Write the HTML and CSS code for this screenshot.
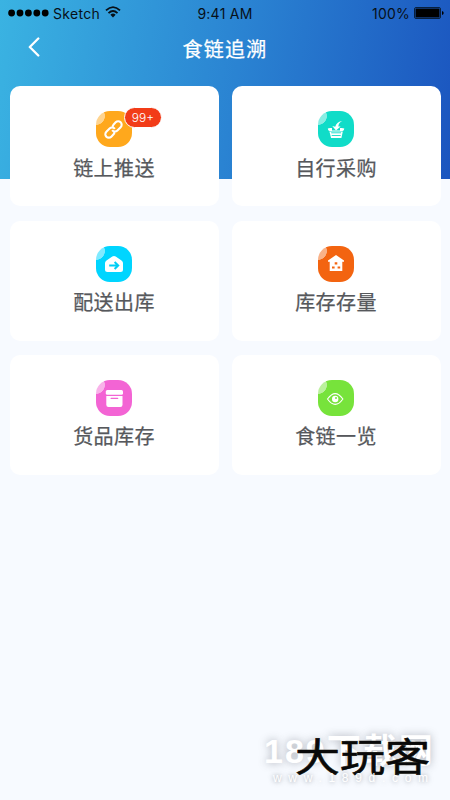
FILE: index.html
```html
<!DOCTYPE html>
<html lang="zh-CN">
<head>
<meta charset="utf-8">
<title>食链追溯</title>
<link rel="stylesheet" href="styles.css">
</head>
<body>
<div class="app">
  <header class="top">
    <div class="status">
      <div class="carrier">
        <svg class="signal" width="41" height="8" viewBox="0 0 41 8"><circle cx="3.6" cy="4" r="3.4"/><circle cx="12" cy="4" r="3.4"/><circle cx="20.4" cy="4" r="3.4"/><circle cx="28.8" cy="4" r="3.4"/><circle cx="37.2" cy="4" r="3.4"/></svg>
        <span class="network">Sketch</span>
        <svg class="wifi" width="16" height="12" viewBox="0 0 16 12" fill="none" stroke="#071018" stroke-width="1.8"><path d="M1 4.4Q8-2.2 15 4.4M3.5 7.1Q8 2.9 12.5 7.1"/><path d="M5.4 8.7Q8 6.5 10.6 8.7L8 11.4Z" fill="#071018" stroke="none"/></svg>
      </div>
      <span class="time">9:41 AM</span>
      <div class="power"><span>100%</span><svg width="30" height="12" viewBox="0 0 30 12"><rect x=".5" y=".5" width="26" height="11" rx="1.5" fill="none" stroke="#08203e"/><rect x="1.5" y="1.5" width="24" height="9" rx=".5"/><path d="M28 4Q29.7 4.3 29.7 6T28 8Z"/></svg></div>
    </div>
    <div class="nav">
      <svg class="back" width="12" height="20" viewBox="0 0 12 20" fill="none" stroke="#fff" stroke-width="2.3" stroke-linecap="round" stroke-linejoin="round"><path d="M10.3 1.5L1.8 10L10.3 18.5"/></svg>
      <h1>食链追溯</h1>
    </div>
  </header>
  <main class="grid">
    <section class="card">
      <div class="icon orange"><svg viewBox="0 0 36 36" fill="none" stroke="#fff" stroke-width="2.1"><g transform="rotate(-45 17.5 18.5)"><path d="M16.5 20.6Q15.6 22 13.8 22H10.9A3.5 3.5 0 0 1 10.9 15H15.5A3.5 3.5 0 0 1 18.9 19"/><path d="M18.5 16.4Q19.4 15 21.2 15H24.1A3.5 3.5 0 0 1 24.1 22H19.5A3.5 3.5 0 0 1 16.1 18"/></g></svg><span class="badge">99+</span></div>
      <h2>链上推送</h2>
    </section>
    <section class="card">
      <div class="icon teal"><svg viewBox="0 0 36 36" fill="#fff"><path d="M24.5 10Q20.7 11.2 20.3 15.5H22.6L18 19.4L14.3 15L17.2 15.8Q18.7 10.4 24.5 10Z"/><path d="M9.8 17.5Q10.8 16.6 14 17V19.5H22V17Q25 16.6 26.3 17.5Q26.2 19.5 24.5 20H11.5Q9.9 19.5 9.8 17.5Z"/><path d="M11.4 20.5H24.8L23.4 27H13.1Z"/><path d="M13.2 21.8H23.1M13.7 24.5H22.7" stroke="#10dcc8" stroke-width=".9"/></svg></div>
      <h2>自行采购</h2>
    </section>
    <section class="card">
      <div class="icon cyan"><svg viewBox="0 0 36 36"><path d="M16.3 10.6Q18 9.2 19.7 10.6L25.5 14.5Q27 15.5 27 17V23.5Q27 26 24.5 26H11.5Q9 26 9 23.5V17Q9 15.5 10.5 14.5Z" fill="#fff"/><path d="M13.2 19.5H21M18.6 16L22.2 19.5L18.6 23" fill="none" stroke="#00cef5" stroke-width="2"/></svg></div>
      <h2>配送出库</h2>
    </section>
    <section class="card">
      <div class="icon red"><svg viewBox="0 0 36 36"><path d="M18 9L26 14.6V15.8H24.3V25H11.7V15.8H10V14.6Z" fill="#fff"/><path d="M16.7 16.2h2.6v2.2h-2.6zM14 20.4h2.6v2.2H14zM19.6 20.4h2.6v2.2h-2.6z" fill="#f36410"/></svg></div>
      <h2>库存存量</h2>
    </section>
    <section class="card">
      <div class="icon pink"><svg viewBox="0 0 36 36"><rect x="9.8" y="10" width="17.2" height="4.7" rx="1.5" fill="#fff"/><path d="M10.3 16H26.5V24.8Q26.5 27 24.3 27H12.5Q10.3 27 10.3 24.8Z" fill="#fff"/><path d="M15.2 18.4H21.6" stroke="#f364d4" stroke-width="1.4" stroke-linecap="round"/></svg></div>
      <h2>货品库存</h2>
    </section>
    <section class="card">
      <div class="icon green"><svg viewBox="0 0 36 36" fill="none" stroke="#fff" stroke-width="1.1"><path d="M9.5 19Q17.2 8.2 24.9 19Q17.2 29.8 9.5 19Z"/><circle cx="17.2" cy="19" r="3.2" fill="#fff" stroke="none"/><circle cx="18" cy="17.9" r="1" fill="#77e33b" stroke="none"/></svg></div>
      <h2>食链一览</h2>
    </section>
  </main>
  <div class="watermark">
    <span class="site">189下载网</span>
    <span class="brand">大玩客</span>
    <span class="url">www.189d.com</span>
  </div>
</div>
</body>
</html>
```
FILE: styles.css
```css
* { box-sizing: border-box; }
body { margin: 0; font-family: "Noto Sans CJK SC", sans-serif; }
svg { display: block; }
.app { position: relative; width: 450px; height: 800px; overflow: hidden; background: #f7faff; }
.top { height: 179px; background: linear-gradient(99deg, #3ab3e2 0%, #2a83d2 52%, #1b55bf 100%); }
.status { display: grid; grid-template-columns: 1fr auto 1fr; align-items: center; height: 26px; padding: 1px 6px 0 8px; font: 14px/26px Inter, sans-serif; color: #071018; }
.carrier { display: flex; align-items: center; }
.signal { margin-top: -3px; }
.network { margin-left: 4px; letter-spacing: .3px; }
.wifi { margin: -4px 0 0 5px; }
.time { margin-right: 2px; font-size: 14px; letter-spacing: .25px; }
.power { display: flex; justify-content: flex-end; align-items: center; gap: 4px; letter-spacing: .2px; }
.power svg { margin-top: -3px; }
.nav { display: grid; grid-template-columns: 60px 1fr 60px; align-items: center; height: 44px; }
.back { margin: -2px 0 0 28px; }
h1 { margin: 0; color: #fff; font-size: 20px; line-height: 44px; font-weight: 400; letter-spacing: 1.2px; text-align: center; -webkit-text-stroke: .25px #fff; }
.nav h1 { padding-top: 1px; line-height: 43px; }
.grid { display: grid; grid-template-columns: 209px 209px; grid-auto-rows: 120px; gap: 14.3px 13px; padding: 0 9.5px; margin-top: -92.8px; }
.card { display: flex; flex-direction: column; align-items: center; padding-top: 25.2px; border-radius: 10px; background: #fff; }
.icon { position: relative; width: 36px; height: 36px; border-radius: 14px; background-image: radial-gradient(circle at 0 5px, rgba(255,255,255,.5) 8.6px, transparent 9.2px); }
.orange { background-color: #ffa81c; }
.teal { background-color: #10dcc8; }
.cyan { background-color: #00d5ff; }
.red { background-color: #f36410; }
.pink { background-color: #f364d4; }
.green { background-color: #77e33b; }
.badge { position: absolute; left: 28px; top: -4.4px; width: 38px; height: 21px; border: 1px solid #fff; border-radius: 11px; background: #f23c18; color: #fff; font: 300 12px/20px Inter, sans-serif; text-align: center; }
h2 { margin: 5.4px 0 0; color: #56585c; font-size: 20px; line-height: 30px; font-weight: 400; letter-spacing: .4px; -webkit-text-stroke: .25px #56585c; }
.watermark { position: absolute; left: 264px; top: 730px; width: 180px; height: 62px; white-space: nowrap; color: #fff; }
.site { position: absolute; left: 0; top: 0; font: 700 34px/42px "Liberation Sans", "Noto Sans CJK SC", sans-serif; letter-spacing: 2px; text-shadow: 0 0 9px rgba(60,65,75,.4); }
.url { position: absolute; left: 9px; top: 39px; font: 12px/18px "Liberation Sans", sans-serif; letter-spacing: 6.7px; text-shadow: 0 0 5px rgba(60,65,75,.6); }
.brand { position: absolute; left: 31px; top: 0; color: #090909; font-size: 45px; line-height: 50px; font-weight: 400; transform: scaleY(.86); -webkit-text-stroke: .7px #090909; text-shadow: 0 0 1px #d6cfa2; }
```
